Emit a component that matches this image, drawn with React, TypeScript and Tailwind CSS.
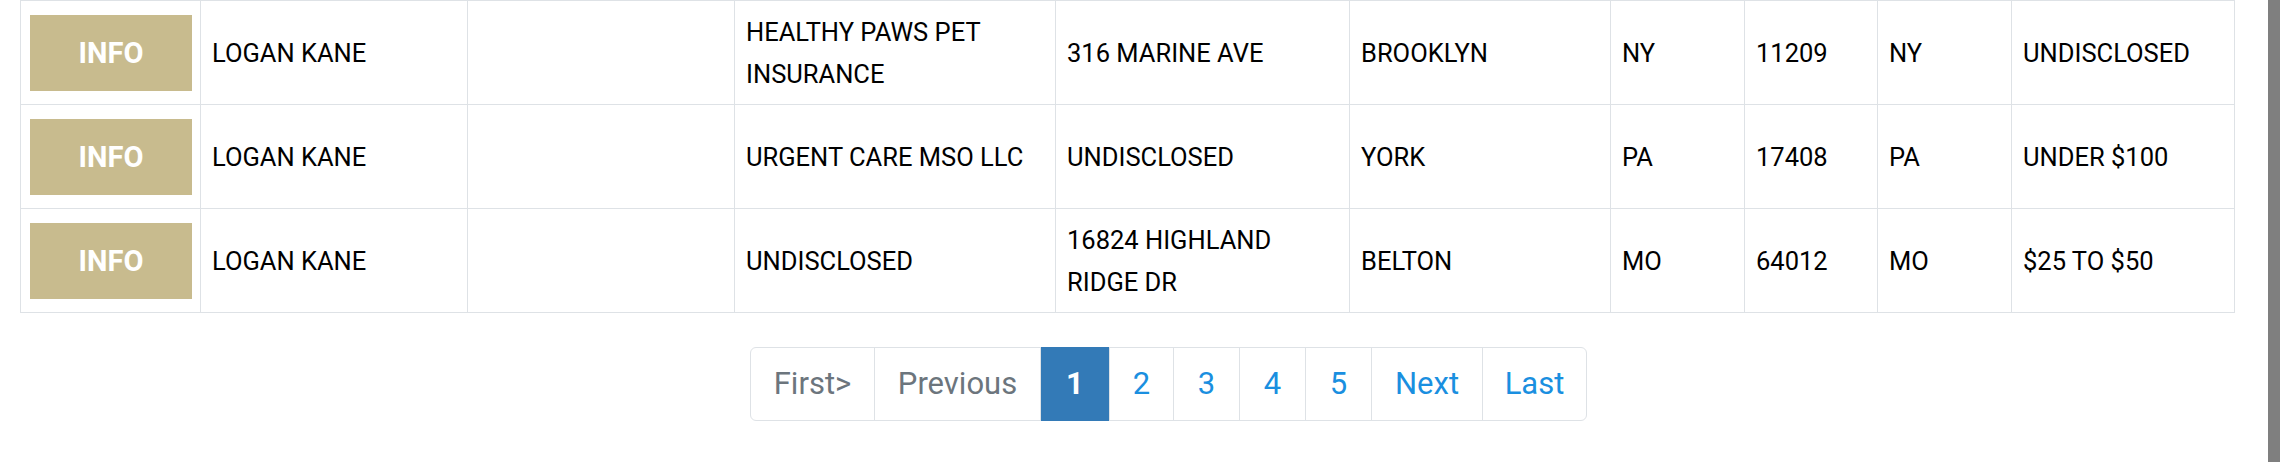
const rows = [
  ["LOGAN KANE", "", "HEALTHY PAWS PET INSURANCE", "316 MARINE AVE", "BROOKLYN", "NY", "11209", "NY", "UNDISCLOSED"],
  ["LOGAN KANE", "", "URGENT CARE MSO LLC", "UNDISCLOSED", "YORK", "PA", "17408", "PA", "UNDER $100"],
  ["LOGAN KANE", "", "UNDISCLOSED", "16824 HIGHLAND RIDGE DR", "BELTON", "MO", "64012", "MO", "$25 TO $50"],
];

const colWidths = ["w-[180px]", "w-[267px]", "w-[267px]", "w-[321px]", "w-[294px]", "w-[261px]", "w-[134px]", "w-[133px]", "w-[134px]", "w-[223px]"];

const pages = [
  { label: "First>", w: "w-[123px]", kind: "muted" },
  { label: "Previous", w: "w-[166px]", kind: "muted" },
  { label: "1", w: "w-[69px]", kind: "active" },
  { label: "2", w: "w-[64px]", kind: "link" },
  { label: "3", w: "w-[66px]", kind: "link" },
  { label: "4", w: "w-[66px]", kind: "link" },
  { label: "5", w: "w-[66px]", kind: "link" },
  { label: "Next", w: "w-[111px]", kind: "link" },
  { label: "Last", w: "w-[104px]", kind: "link" },
];

export default function App() {
  return (
    <div className="relative flex w-[2280px] h-[462px] bg-white overflow-hidden font-['Roboto',sans-serif]">
      <div className="flex-1 flex flex-col">
        <table className="ml-[20px] w-[2214px] table-fixed border-collapse text-[25.5px] leading-[42px] text-black">
          <colgroup>
            {colWidths.map((w, i) => (
              <col key={i} className={w} />
            ))}
          </colgroup>
          <tbody>
            {rows.map((r, ri) => (
              <tr key={ri} className="h-[104px]">
                <td className="border border-[#dee2e6] px-[9px] align-middle">
                  <div className="flex h-[76px] w-[162px] items-center justify-center bg-[#c8bb8e] text-[29px] font-bold text-white">
                    INFO
                  </div>
                </td>
                {r.map((c, ci) => (
                  <td key={ci} className="border border-[#dee2e6] px-[11px] align-middle">
                    {c}
                  </td>
                ))}
              </tr>
            ))}
          </tbody>
        </table>
        <div className="mt-[34px] ml-[750px] flex h-[74px] w-fit rounded-[6px] border border-[#dee2e6] text-[31px]">
          {pages.map((p, i) => (
            <div
              key={p.label}
              className={[
                "flex items-center justify-center",
                p.w,
                i > 0 ? "border-l border-[#dee2e6]" : "",
                p.kind === "active" ? "bg-[#337ab7] text-white font-bold -my-px border-[#337ab7]" : "",
                p.kind === "muted" ? "text-[#6c757d]" : "",
                p.kind === "link" ? "text-[#1a8fe0]" : "",
                i === 0 ? "rounded-l-[6px]" : "",
                i === pages.length - 1 ? "rounded-r-[6px]" : "",
              ].join(" ")}
            >
              {p.label}
            </div>
          ))}
        </div>
      </div>
      <div className="w-[12px] h-full bg-[#7f7f7f]" />
    </div>
  );
}
